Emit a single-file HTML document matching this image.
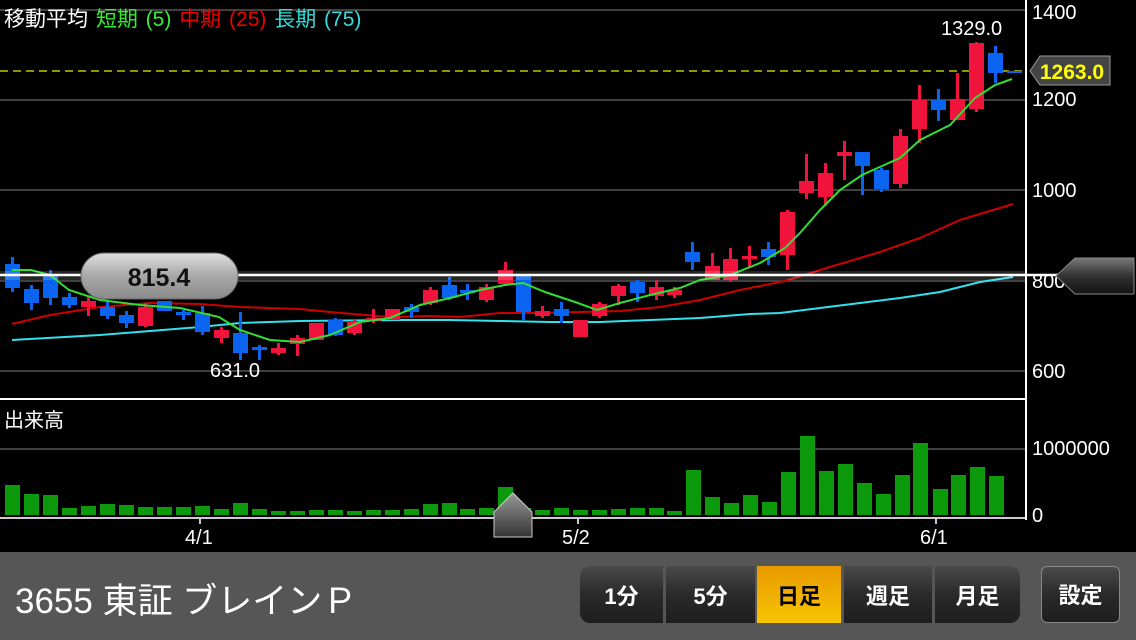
<!DOCTYPE html>
<html><head><meta charset="utf-8"><style>
body{margin:0;width:1136px;height:640px;background:#000;overflow:hidden;font-family:"Liberation Sans","Noto Sans CJK JP",sans-serif;position:relative}
.ax{position:absolute;color:#fff;font-size:20px}
.bar{position:absolute;left:0;top:552px;width:1136px;height:88px;background:#565656}
.seg{position:absolute;top:566px;height:57px;background:linear-gradient(#4a4a4a,#2a2a2a 50%,#1e1e1e);color:#fff;font-size:22px;font-weight:bold;text-align:center;line-height:62px}
</style></head><body>
<svg width="1136" height="552" style="position:absolute;left:0;top:0">
<defs><linearGradient id="pill" x1="0" y1="0" x2="0" y2="1"><stop offset="0" stop-color="#e0e0e0"/><stop offset="0.5" stop-color="#a8a8a8"/><stop offset="1" stop-color="#8a8a8a"/></linearGradient>
<linearGradient id="arr" x1="0" y1="0" x2="0" y2="1"><stop offset="0" stop-color="#777"/><stop offset="0.5" stop-color="#333"/><stop offset="1" stop-color="#111"/></linearGradient>
<linearGradient id="tri" x1="0" y1="0" x2="0" y2="1"><stop offset="0" stop-color="#999"/><stop offset="1" stop-color="#333"/></linearGradient></defs>
<g stroke="#555" stroke-width="1.5">
<line x1="0" y1="10" x2="1025" y2="10"/><line x1="0" y1="100" x2="1025" y2="100"/><line x1="0" y1="190" x2="1025" y2="190"/><line x1="0" y1="281" x2="1025" y2="281"/><line x1="0" y1="371" x2="1025" y2="371"/><line x1="0" y1="449" x2="1025" y2="449"/>
</g>
<line x1="0" y1="71" x2="1025" y2="71" stroke="#ee0" stroke-width="1.3" stroke-dasharray="8,5"/>
<line x1="0" y1="399" x2="1025" y2="399" stroke="#fff" stroke-width="2"/>
<line x1="1026" y1="0" x2="1026" y2="520" stroke="#fff" stroke-width="2"/>
<line x1="0" y1="518" x2="1025" y2="518" stroke="#ccc" stroke-width="2"/>
<g stroke="#ccc" stroke-width="2"><line x1="200" y1="518" x2="200" y2="524"/><line x1="578" y1="518" x2="578" y2="524"/><line x1="936" y1="518" x2="936" y2="524"/></g>
<g fill="#0c9a0c">
<rect x="5" y="485" width="15" height="30"/><rect x="24" y="494" width="15" height="21"/><rect x="43" y="495" width="15" height="20"/><rect x="62" y="508" width="15" height="7"/><rect x="81" y="506" width="15" height="9"/><rect x="100" y="504" width="15" height="11"/><rect x="119" y="505" width="15" height="10"/><rect x="138" y="507" width="15" height="8"/><rect x="157" y="507" width="15" height="8"/><rect x="176" y="507" width="15" height="8"/><rect x="195" y="506" width="15" height="9"/><rect x="214" y="509" width="15" height="6"/><rect x="233" y="503" width="15" height="12"/><rect x="252" y="509" width="15" height="6"/><rect x="271" y="511" width="15" height="4"/><rect x="290" y="511" width="15" height="4"/><rect x="309" y="510" width="15" height="5"/><rect x="328" y="510" width="15" height="5"/><rect x="347" y="511" width="15" height="4"/><rect x="366" y="510" width="15" height="5"/><rect x="385" y="510" width="15" height="5"/><rect x="404" y="509" width="15" height="6"/><rect x="423" y="504" width="15" height="11"/><rect x="442" y="503" width="15" height="12"/><rect x="460" y="509" width="15" height="6"/><rect x="479" y="508" width="15" height="7"/><rect x="498" y="487" width="15" height="28"/><rect x="516" y="508" width="15" height="7"/><rect x="535" y="510" width="15" height="5"/><rect x="554" y="508" width="15" height="7"/><rect x="573" y="510" width="15" height="5"/><rect x="592" y="510" width="15" height="5"/><rect x="611" y="509" width="15" height="6"/><rect x="630" y="508" width="15" height="7"/><rect x="649" y="508" width="15" height="7"/><rect x="667" y="511" width="15" height="4"/><rect x="686" y="470" width="15" height="45"/><rect x="705" y="497" width="15" height="18"/><rect x="724" y="503" width="15" height="12"/><rect x="743" y="495" width="15" height="20"/><rect x="762" y="502" width="15" height="13"/><rect x="781" y="472" width="15" height="43"/><rect x="800" y="436" width="15" height="79"/><rect x="819" y="471" width="15" height="44"/><rect x="838" y="464" width="15" height="51"/><rect x="857" y="483" width="15" height="32"/><rect x="876" y="494" width="15" height="21"/><rect x="895" y="475" width="15" height="40"/><rect x="913" y="443" width="15" height="72"/><rect x="933" y="489" width="15" height="26"/><rect x="951" y="475" width="15" height="40"/><rect x="970" y="467" width="15" height="48"/><rect x="989" y="476" width="15" height="39"/>
</g>
<polyline fill="none" stroke="#cc0000" stroke-width="2" points="12,324 50,315 100,307 150,303 200,304 240,307 300,309 330,312 390,317 430,316 460,317 500,313 540,313 580,312 620,311 660,307 700,300 740,290 785,281 830,267 880,252 920,238 960,220 1013,204"/>
<polyline fill="none" stroke="#33e0ee" stroke-width="2" points="12,340 100,335 150,331 200,327 240,323 300,321 400,320 450,320 500,321 550,322 600,322 650,320 700,318 750,314 780,313 820,308 860,303 900,298 940,292 980,282 1013,277"/>
<g fill="#0a64f0">
<rect x="11" y="257" width="3" height="35"/><rect x="5" y="264" width="15" height="24"/>
<rect x="30" y="285" width="3" height="25"/><rect x="24" y="289" width="15" height="14"/>
<rect x="49" y="270" width="3" height="35"/><rect x="43" y="274" width="15" height="24"/>
<rect x="68" y="293" width="3" height="15"/><rect x="62" y="297" width="15" height="8"/>
<rect x="106" y="302" width="3" height="17"/><rect x="100" y="307" width="15" height="9"/>
<rect x="125" y="311" width="3" height="17"/><rect x="119" y="315" width="15" height="8"/>
<rect x="157" y="301" width="15" height="10"/>
<rect x="182" y="310" width="3" height="10"/><rect x="176" y="312" width="15" height="3"/>
<rect x="201" y="306" width="3" height="29"/><rect x="195" y="313" width="15" height="19"/>
<rect x="239" y="312" width="3" height="48"/><rect x="233" y="333" width="15" height="20"/>
<rect x="258" y="345" width="3" height="15"/><rect x="252" y="347" width="15" height="3"/>
<rect x="334" y="318" width="3" height="18"/><rect x="328" y="320" width="15" height="15"/>
<rect x="410" y="304" width="3" height="14"/><rect x="404" y="307" width="15" height="5"/>
<rect x="448" y="277" width="3" height="23"/><rect x="442" y="285" width="15" height="13"/>
<rect x="466" y="284" width="3" height="16"/><rect x="460" y="290" width="15" height="3"/>
<rect x="522" y="276" width="3" height="44"/><rect x="516" y="276" width="15" height="36"/>
<rect x="560" y="302" width="3" height="21"/><rect x="554" y="309" width="15" height="7"/>
<rect x="636" y="280" width="3" height="22"/><rect x="630" y="282" width="15" height="11"/>
<rect x="691" y="242" width="3" height="28"/><rect x="685" y="252" width="15" height="10"/>
<rect x="767" y="242" width="3" height="23"/><rect x="761" y="249" width="15" height="8"/>
<rect x="861" y="152" width="3" height="43"/><rect x="855" y="152" width="15" height="14"/>
<rect x="880" y="168" width="3" height="24"/><rect x="874" y="170" width="15" height="19"/>
<rect x="937" y="89" width="3" height="32"/><rect x="931" y="100" width="15" height="10"/>
<rect x="994" y="46" width="3" height="37"/><rect x="988" y="53" width="15" height="20"/>
<rect x="1007" y="71" width="15" height="2"/>
</g>
<g fill="#f0143c">
<rect x="87" y="296" width="3" height="20"/><rect x="81" y="301" width="15" height="6"/>
<rect x="144" y="303" width="3" height="24"/><rect x="138" y="307" width="15" height="19"/>
<rect x="220" y="327" width="3" height="16"/><rect x="214" y="330" width="15" height="8"/>
<rect x="277" y="343" width="3" height="12"/><rect x="271" y="348" width="15" height="5"/>
<rect x="296" y="335" width="3" height="21"/><rect x="290" y="338" width="15" height="6"/>
<rect x="309" y="323" width="15" height="17"/>
<rect x="353" y="319" width="3" height="16"/><rect x="347" y="322" width="15" height="11"/>
<rect x="372" y="309" width="3" height="14"/><rect x="366" y="318" width="15" height="3"/>
<rect x="385" y="309" width="15" height="11"/>
<rect x="429" y="287" width="3" height="18"/><rect x="423" y="290" width="15" height="13"/>
<rect x="485" y="284" width="3" height="18"/><rect x="479" y="287" width="15" height="13"/>
<rect x="504" y="262" width="3" height="24"/><rect x="498" y="270" width="15" height="14"/>
<rect x="541" y="306" width="3" height="12"/><rect x="535" y="311" width="15" height="5"/>
<rect x="573" y="320" width="15" height="17"/>
<rect x="598" y="302" width="3" height="16"/><rect x="592" y="304" width="15" height="12"/>
<rect x="617" y="284" width="3" height="21"/><rect x="611" y="286" width="15" height="10"/>
<rect x="655" y="280" width="3" height="20"/><rect x="649" y="287" width="15" height="9"/>
<rect x="673" y="287" width="3" height="11"/><rect x="667" y="290" width="15" height="5"/>
<rect x="711" y="253" width="3" height="27"/><rect x="705" y="266" width="15" height="14"/>
<rect x="729" y="248" width="3" height="34"/><rect x="723" y="259" width="15" height="21"/>
<rect x="748" y="246" width="3" height="22"/><rect x="742" y="256" width="15" height="3"/>
<rect x="786" y="210" width="3" height="60"/><rect x="780" y="212" width="15" height="43"/>
<rect x="805" y="154" width="3" height="45"/><rect x="799" y="181" width="15" height="12"/>
<rect x="824" y="163" width="3" height="43"/><rect x="818" y="173" width="15" height="24"/>
<rect x="843" y="141" width="3" height="39"/><rect x="837" y="152" width="15" height="4"/>
<rect x="899" y="129" width="3" height="59"/><rect x="893" y="136" width="15" height="48"/>
<rect x="918" y="85" width="3" height="58"/><rect x="912" y="100" width="15" height="29"/>
<rect x="956" y="73" width="3" height="47"/><rect x="950" y="99" width="15" height="21"/>
<rect x="975" y="42" width="3" height="70"/><rect x="969" y="43" width="15" height="66"/>
</g>
<polyline fill="none" stroke="#33dd33" stroke-width="2" points="12,270 31,270 50,275 69,290 100,300 140,305 180,308 219,317 240,330 270,340 300,342 330,335 360,322 390,318 420,305 450,298 480,290 505,285 523,283 545,292 575,302 597,310 620,303 650,295 680,288 700,280 730,275 760,263 785,248 800,233 820,210 840,190 862,175 882,166 900,158 920,140 950,125 975,98 995,85 1012,79"/>
<rect x="0" y="271" width="1025" height="9" fill="#fff" opacity="0.15"/>
<line x1="0" y1="275" x2="1060" y2="275" stroke="#fff" stroke-width="2.5"/>
<rect x="81" y="253" width="157" height="46" rx="23" fill="url(#pill)" stroke="#666"/>
<path d="M1056,276 L1075,258 L1134,258 L1134,294 L1075,294 Z" fill="url(#arr)" stroke="#888"/>
<path d="M1030,71 L1040,56 L1110,56 L1110,85 L1040,85 Z" fill="#444" stroke="#999"/>
<path d="M494,537 L494,512 L513,493 L532,512 L532,537 Z" fill="url(#tri)" stroke="#ccc"/>
<text x="159" y="286" font-size="25" font-weight="bold" text-anchor="middle" fill="#111" font-family="Liberation Sans">815.4</text>
<text x="1072" y="79" font-size="21" font-weight="bold" text-anchor="middle" fill="#ff0" font-family="Liberation Sans">1263.0</text>
</svg>
<div class="ax" style="left:4px;top:3px;font-size:21px;white-space:nowrap;word-spacing:2px">移動平均 <span style="color:#3e3">短期 (5)</span> <span style="color:#e00">中期 (25)</span> <span style="color:#3dd">長期 (75)</span></div>
<div class="ax" style="left:1032px;top:2px">1400</div>
<div class="ax" style="left:1032px;top:89px">1200</div>
<div class="ax" style="left:1032px;top:180px">1000</div>
<div class="ax" style="left:1032px;top:271px;z-index:-1">800</div>
<div class="ax" style="left:1032px;top:361px">600</div>
<div class="ax" style="left:1032px;top:438px">1000000</div>
<div class="ax" style="left:1032px;top:505px">0</div>
<div class="ax" style="left:941px;top:18px">1329.0</div>
<div class="ax" style="left:210px;top:360px">631.0</div>
<div class="ax" style="left:4px;top:404px;font-size:20px">出来高</div>
<div class="ax" style="left:185px;top:527px">4/1</div>
<div class="ax" style="left:562px;top:527px">5/2</div>
<div class="ax" style="left:920px;top:527px">6/1</div>
<div class="bar"></div>
<div class="ax" style="left:15px;top:573px;font-size:35px;white-space:nowrap">3655 東証 ブレインＰ</div>
<div class="seg" style="left:580px;width:83px;border-radius:10px 0 0 10px">1分</div>
<div class="seg" style="left:666px;width:89px">5分</div>
<div class="seg" style="left:757px;width:84px;background:linear-gradient(#e89a00,#f7c400);color:#000">日足</div>
<div class="seg" style="left:844px;width:88px">週足</div>
<div class="seg" style="left:935px;width:85px;border-radius:0 10px 10px 0">月足</div>
<div class="seg" style="left:1041px;width:79px;border-radius:6px;border:1px solid #888;box-sizing:border-box;line-height:58px">設定</div>
</body></html>
